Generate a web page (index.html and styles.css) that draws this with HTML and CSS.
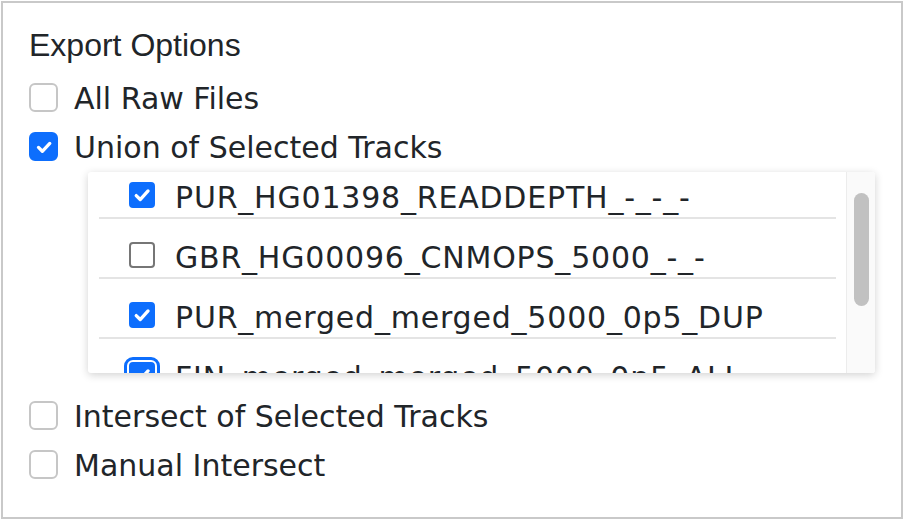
FILE: index.html
```html
<!DOCTYPE html>
<html lang="en">
<head>
    <meta charset="UTF-8">
    <meta name="viewport" content="width=device-width, initial-scale=1.0">
    <title>Export Options</title>
    <link rel="stylesheet" href="styles.css">
</head>
<body>
    <div class="panel">
        <h2 class="title">Export Options</h2>

        <label class="option">
            <span class="box"></span>
            <span class="option-text">All Raw Files</span>
        </label>
        <label class="option">
            <span class="box checked">
                <svg viewBox="0 0 16 16"><path d="M4 8.3l2.8 2.8L12.2 5.4"/></svg>
            </span>
            <span class="option-text">Union of Selected Tracks</span>
        </label>

        <div class="track-list">
            <div class="track-view">
                <div class="track-rows">
                    <div class="track">
                        <span class="box small checked">
                            <svg viewBox="0 0 16 16"><path d="M3.8 8.4l2.9 2.9L12.4 5"/></svg>
                        </span>
                        <span class="track-name">PUR_HG01398_READDEPTH_-_-_-</span>
                    </div>
                    <div class="track">
                        <span class="box small"></span>
                        <span class="track-name">GBR_HG00096_CNMOPS_5000_-_-</span>
                    </div>
                    <div class="track">
                        <span class="box small checked">
                            <svg viewBox="0 0 16 16"><path d="M3.8 8.4l2.9 2.9L12.4 5"/></svg>
                        </span>
                        <span class="track-name">PUR_merged_merged_5000_0p5_DUP</span>
                    </div>
                    <div class="track">
                        <span class="box small checked focused">
                            <svg viewBox="0 0 16 16"><path d="M3.8 8.4l2.9 2.9L12.4 5"/></svg>
                        </span>
                        <span class="track-name">FIN_merged_merged_5000_0p5_ALL</span>
                    </div>
                </div>
            </div>
            <div class="scrollbar">
                <div class="thumb"></div>
            </div>
        </div>

        <label class="option">
            <span class="box"></span>
            <span class="option-text">Intersect of Selected Tracks</span>
        </label>
        <label class="option">
            <span class="box"></span>
            <span class="option-text">Manual Intersect</span>
        </label>
    </div>
</body>
</html>
```

FILE: styles.css
```css
body {
    margin: 0;
    background-color: #fff;
    color: #212529;
    font-family: "DejaVu Sans", Verdana, sans-serif;
}

.panel {
    box-sizing: border-box;
    width: 902px;
    height: 518px;
    margin: 1px;
    padding: 23px 0 0 26px;
    border: 2px solid #c9c9c9;
}

.title {
    margin: 0 0 9px;
    font-family: "Liberation Sans", Arial, sans-serif;
    font-size: 32px;
    font-weight: normal;
    line-height: 38px;
}

.option {
    display: flex;
    align-items: center;
    gap: 16px;
    height: 49px;
    font-size: 30px;
}

.option-text {
    margin-top: 2px;
}

.box {
    box-sizing: border-box;
    display: flex;
    align-items: center;
    justify-content: center;
    flex-shrink: 0;
    width: 29px;
    height: 29px;
    border: 2px solid #c6c6c6;
    border-radius: 6px;
    background-color: #fff;
}

.box.checked {
    border-color: #0d6efd;
    background-color: #0d6efd;
}

.box svg {
    width: 22px;
    height: 22px;
    fill: none;
    stroke: #fff;
    stroke-width: 2.4;
    stroke-linecap: round;
    stroke-linejoin: round;
}

.box.small {
    width: 26px;
    height: 26px;
    border-color: #767676;
    border-radius: 4px;
}

.box.small.checked {
    border-color: #0d6efd;
}

.box.small svg {
    width: 24px;
    height: 24px;
}

.box.focused {
    outline: 3px solid #0d6efd;
    outline-offset: 2px;
}

.track-list {
    display: flex;
    width: 787px;
    height: 201px;
    margin: 1px 0 18px 59px;
    overflow: hidden;
    border-radius: 3px;
    background-color: #fff;
    box-shadow: 0 2px 8px rgba(0, 0, 0, 0.18);
}

.track-view {
    flex: 1;
    overflow: hidden;
    padding: 0 10px 0 11px;
}

.track-rows {
    margin-top: -13px;
}

.track {
    display: flex;
    align-items: center;
    gap: 20px;
    height: 25px;
    padding: 23px 0 10px 30px;
    border-bottom: 2px solid #e4e4e4;
    font-size: 30px;
    letter-spacing: 0.8px;
    white-space: nowrap;
}

.track-name {
    margin-top: 5px;
}

.scrollbar {
    width: 28px;
    padding-top: 21px;
    border-left: 1px solid #ececec;
    background-color: #fafafa;
}

.thumb {
    width: 15px;
    height: 113px;
    margin-left: 7px;
    border-radius: 8px;
    background-color: #c1c1c1;
}
```
